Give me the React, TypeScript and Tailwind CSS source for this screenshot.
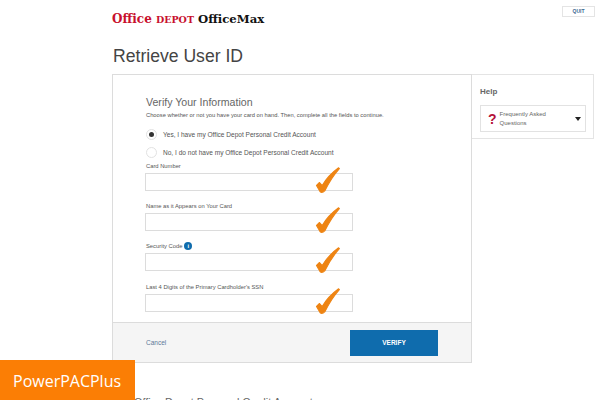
const font = { fontFamily: '"Liberation Sans", Arial, sans-serif' };
const logoFont = { fontFamily: '"DejaVu Serif", serif' };

function Check() {
  return (
    <svg className="absolute right-[12px] bottom-[-3px]" width="26" height="26" viewBox="0 0 26 26">
      <path d="M2.5 18.5 L5.5 15.5 L8.2 18.6 Q14 8.5 24.6 0.8 L25.4 1.6 Q17 11 11 23.6 Q8 26.5 6 24.5 Z" fill="#ee8413" stroke="#ee8413" strokeWidth="1.1" strokeLinejoin="round" />
    </svg>
  );
}

function Field({ label, info, mt }: { label: string; info?: boolean; mt: string }) {
  return (
    <div className={mt}>
      <div className="flex items-center gap-[2px] h-[10px] pt-[2px] text-[5.8px] text-[#555] leading-[10px]">
        {label}
        {info && (
          <span className="w-[8px] h-[8px] rounded-full bg-[#0f6cad] text-white text-[6px] leading-[8px] font-bold text-center">i</span>
        )}
      </div>
      <div className="relative mt-[3px] -ml-[1px] w-[208px] h-[18px] border border-[#dcdcdc] bg-white">
        <Check />
      </div>
    </div>
  );
}

function Radio({ checked, label, mt }: { checked?: boolean; label: string; mt: string }) {
  return (
    <div className={`flex items-center ${mt}`}>
      <span className="w-[11px] h-[11px] rounded-full border border-[#e2e2e2] bg-white flex items-center justify-center">
        {checked && <span className="w-[5px] h-[5px] rounded-full bg-[#333]" />}
      </span>
      <span className="ml-[6px] text-[6.56px] leading-[10px] text-[#555]">{label}</span>
    </div>
  );
}

export default function App() {
  return (
    <div className="relative w-[600px] h-[400px] overflow-hidden bg-white" style={font}>
      <div className="flex justify-between pl-[112px] pr-[5px] pt-[6px] h-[30px]">
        <div className="flex items-baseline pt-[6px] h-[18px]" style={logoFont}>
          <span className="text-[#c8102e] text-[12px] leading-[14px] font-bold">
            Office <span className="text-[9.5px]">DEPOT</span>
          </span>
          <span className="ml-[4px] text-[#111] text-[11.7px] leading-[14px] font-bold">OfficeMax</span>
        </div>
        <div className="w-[33px] h-[11px] border border-[#e4e4e4] text-[5px] font-bold text-[#3b6a92] text-center leading-[9px]">QUIT</div>
      </div>
      <h1 className="pl-[113px] mt-[14px] text-[17.6px] leading-[24px] text-[#444]">Retrieve User ID</h1>
      <div className="flex ml-[112px] mt-[6px] items-start">
        <div className="w-[360px] h-[289px] border border-[#dcdcdc] flex flex-col">
          <div className="flex-1 pl-[33px] pt-[20px]">
            <div className="text-[10.6px] leading-[14px] text-[#666]">Verify Your Information</div>
            <div className="mt-[2px] text-[5.77px] leading-[8px] text-[#555]">Choose whether or not you have your card on hand. Then, complete all the fields to continue.</div>
            <Radio checked label="Yes, I have my Office Depot Personal Credit Account" mt="mt-[10px]" />
            <Radio label="No, I do not have my Office Depot Personal Credit Account" mt="mt-[7px]" />
            <Field label="Card Number" mt="mt-[2px]" />
            <Field label="Name as it Appears on Your Card" mt="mt-[9px]" />
            <Field label="Security Code" info mt="mt-[9px]" />
            <Field label="Last 4 Digits of the Primary Cardholder's SSN" mt="mt-[10px]" />
          </div>
          <div className="h-[40px] bg-[#f5f5f5] border-t border-[#dcdcdc] flex items-center justify-between pl-[33px] pr-[33px]">
            <span className="text-[6.5px] text-[#5b7a99]">Cancel</span>
            <span className="w-[88px] h-[26px] bg-[#0f6cad] text-white text-[6.5px] font-bold flex items-center justify-center">VERIFY</span>
          </div>
        </div>
        <div className="w-[122px] h-[65px] border border-l-0 border-[#e4e4e4] pl-[8px] pt-[12px]">
          <div className="text-[8px] leading-[10px] font-bold text-[#666]">Help</div>
          <div className="mt-[8px] w-[106px] h-[27px] border border-[#e2e2e2] flex items-center pl-[7px]">
            <span className="text-[#b5123a] text-[14px] font-bold leading-none">?</span>
            <span className="ml-[3px] w-[55px] text-[6px] leading-[8.5px] text-[#666]">Frequently Asked Questions</span>
            <span className="ml-[20px] w-0 h-0 border-x-[3px] border-x-transparent border-t-[4px] border-t-[#222]" />
          </div>
        </div>
      </div>
      <div className="pl-[134px] mt-[32px] text-[10.8px] leading-[14px] text-[#666]">Office Depot Personal Credit Account</div>
      <div className="absolute left-0 bottom-0 w-[135px] h-[40px] bg-[#fb7e05] text-white text-[16px] leading-[43px] pl-[13px]" style={{ fontFamily: '"Open Sans", sans-serif' }}>PowerPACPlus</div>
    </div>
  );
}
